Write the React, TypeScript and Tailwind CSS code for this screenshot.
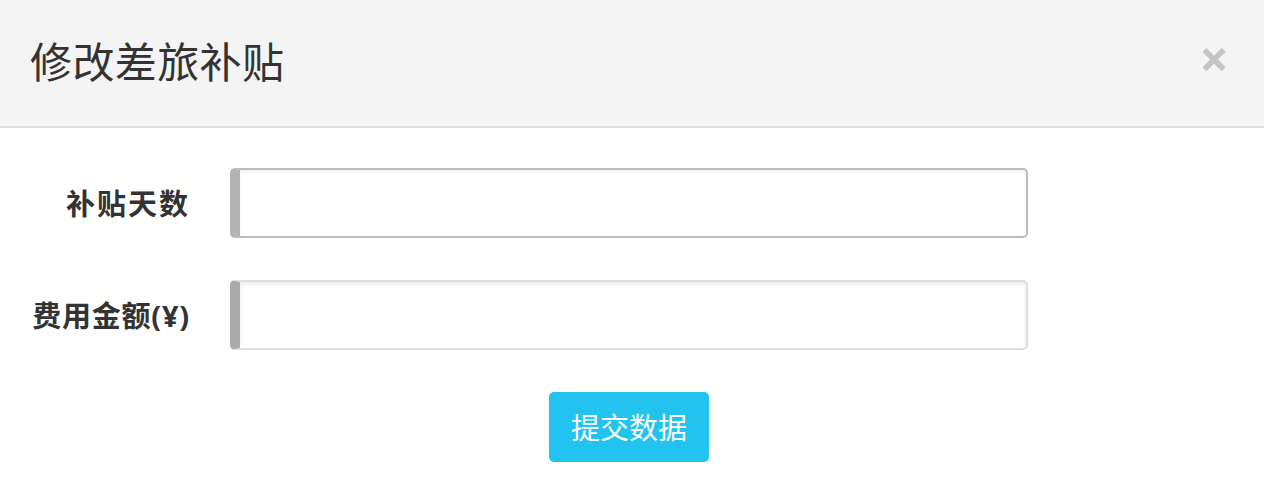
import React from "react";

export default function App() {
  const font = { fontFamily: '"Open Sans", "Noto Sans CJK SC", sans-serif' };
  return (
    <div className="w-[1264px] h-[500px] bg-white" style={font}>
      <div className="h-[128px] bg-[#f4f4f4] border-b-2 border-[#dddddd] flex items-center justify-between pl-[30px] pr-[35px]">
        <h1 className="text-[42px] leading-none text-[#333333] font-normal tracking-[0.4px] pb-[2px]">修改差旅补贴</h1>
        <span className="text-[52px] leading-none font-bold text-[#c4c4c4] -mt-[10px]">×</span>
      </div>
      <div className="pt-[40px] flex flex-col gap-[42px]">
        <div className="flex items-center">
          <label className="w-[190px] text-right text-[29px] font-bold text-[#333333] leading-none tracking-[2px]">补贴天数</label>
          <div className="ml-[40px] w-[798px] h-[70px] rounded-[5px] border-2 border-[#bbbbbb] border-l-[10px] border-l-[#b3b3b3] bg-white shadow-[inset_0_2px_3px_rgba(0,0,0,0.06)]" />
        </div>
        <div className="flex items-center">
          <label className="w-[190px] text-right text-[29px] font-bold text-[#333333] leading-none tracking-[0.8px]">费用金额(¥)</label>
          <div className="ml-[40px] w-[798px] h-[70px] rounded-[5px] border-2 border-[#dddddd] border-l-[10px] border-l-[#aaaaaa] bg-white shadow-[inset_0_3px_4px_rgba(0,0,0,0.07)]" />
        </div>
      </div>
      <div className="flex justify-center pt-[42px]">
        <button className="ml-[-6px] w-[160px] h-[70px] rounded-[5px] bg-[#22c3ee] text-white text-[29px] leading-none">提交数据</button>
      </div>
    </div>
  );
}
